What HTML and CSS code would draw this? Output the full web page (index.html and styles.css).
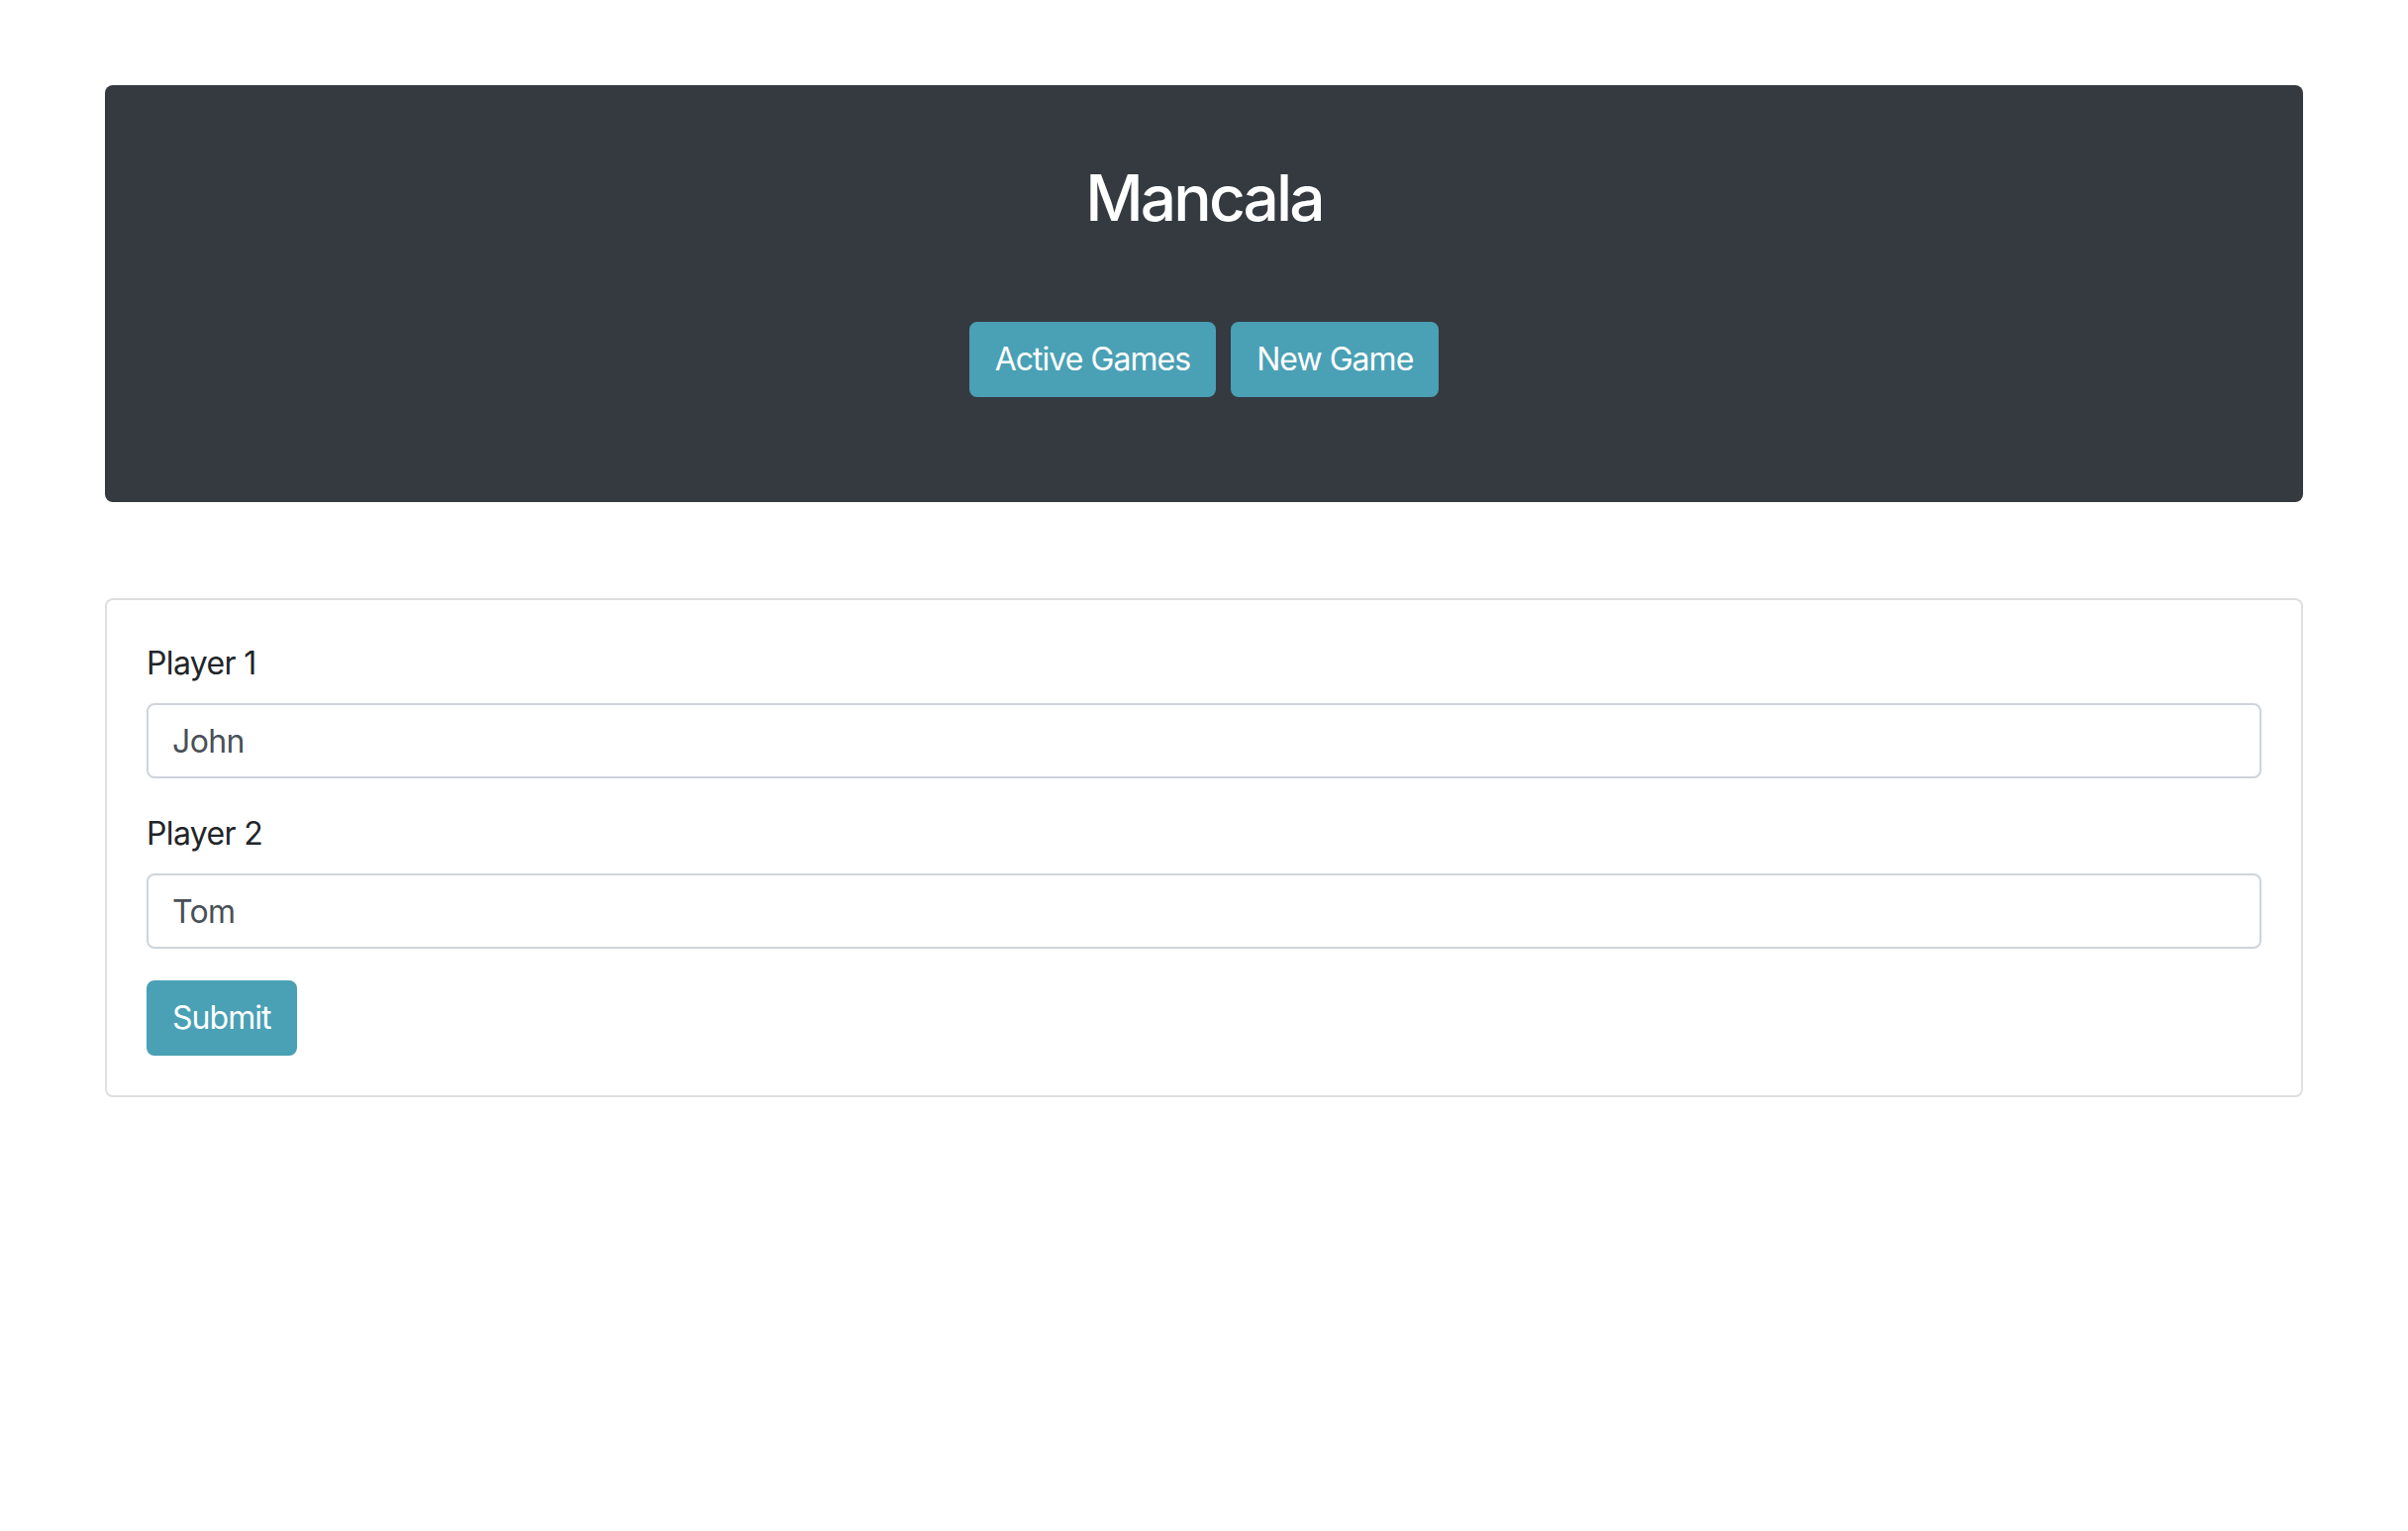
FILE: index.html
```html
<!DOCTYPE html>
<html lang="en">
<head>
<meta charset="utf-8">
<title>Mancala</title>
<link rel="stylesheet" href="styles.css">
</head>
<body>
<div class="container">
  <header class="jumbotron">
    <h2 class="title">Mancala</h2>
    <div class="actions">
      <button class="btn">Active Games</button>
      <button class="btn">New Game</button>
    </div>
  </header>
  <section class="card">
    <form class="card-body">
      <div class="form-group">
        <label class="label" for="p1">Player 1</label>
        <input class="input" id="p1" type="text" value="John">
      </div>
      <div class="form-group">
        <label class="label" for="p2">Player 2</label>
        <input class="input" id="p2" type="text" value="Tom">
      </div>
      <button class="btn" type="button">Submit</button>
    </form>
  </section>
</div>
</body>
</html>
```

FILE: styles.css
```css
* { box-sizing: border-box; }
html, body { margin: 0; padding: 0; background: #fff; }
body {
  font-family: Inter, "Noto Sans", "Liberation Sans", sans-serif;
  color: #212529;
  font-size: 32px;
  line-height: 1.5;
  letter-spacing: -0.02em;
}
.container {
  width: 2220px;
  margin: 0 auto;
  padding-top: 86px;
}
.jumbotron {
  background: #343a40;
  border-radius: 8px;
  padding: 75px 32px 106px;
  display: flex;
  flex-direction: column;
  align-items: center;
}
.title {
  margin: 0;
  font-size: 64px;
  font-weight: 500;
  line-height: 77px;
  color: #fff;
  letter-spacing: -0.045em;
}
.actions {
  margin-top: 87px;
  display: flex;
  gap: 15px;
}
.btn {
  font-family: inherit;
  font-size: 32px;
  line-height: 48px;
  font-weight: 400;
  letter-spacing: -0.03em;
  color: #fff;
  background: #4aa0b5;
  border: 2px solid #4aa0b5;
  border-radius: 8px;
  padding: 12px 24px;
  cursor: pointer;
}
.card {
  margin-top: 97px;
  border: 2px solid #dfdfdf;
  border-radius: 8px;
}
.card-body {
  padding: 40px;
  margin: 0;
}
.form-group {
  margin-bottom: 32px;
}
.label {
  display: block;
  margin-bottom: 16px;
  line-height: 48px;
}
.input {
  display: block;
  width: 100%;
  height: 76px;
  padding: 12px 24px;
  font-family: inherit;
  font-size: 32px;
  line-height: 48px;
  letter-spacing: -0.02em;
  color: #495057;
  background: #fff;
  border: 2px solid #ced4da;
  border-radius: 8px;
  outline: none;
}
```
